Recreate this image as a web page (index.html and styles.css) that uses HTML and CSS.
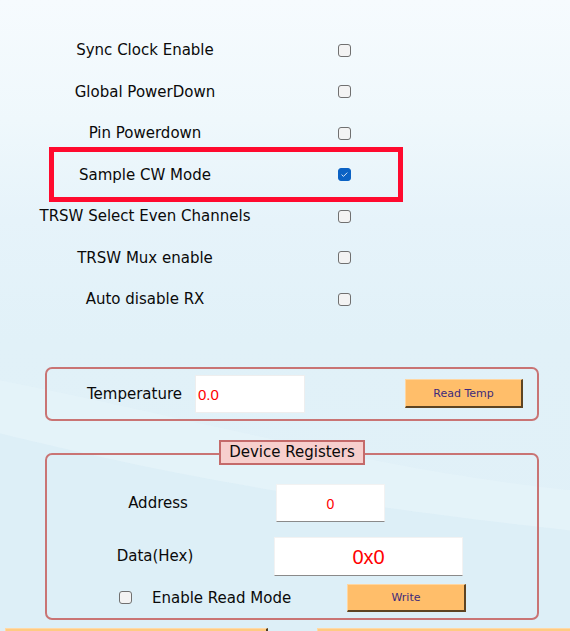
FILE: index.html
```html
<!DOCTYPE html>
<html>
<head>
<meta charset="utf-8">
<link rel="stylesheet" href="styles.css">
</head>
<body>
<div class="page">
  <div class="options">
    <div class="opt"><span class="lbl">Sync Clock Enable</span><input type="checkbox" class="cb"></div>
    <div class="opt"><span class="lbl">Global PowerDown</span><input type="checkbox" class="cb"></div>
    <div class="opt"><span class="lbl">Pin Powerdown</span><input type="checkbox" class="cb"></div>
    <div class="opt hl"><span class="lbl">Sample CW Mode</span><input type="checkbox" class="cb" checked></div>
    <div class="opt"><span class="lbl">TRSW Select Even Channels</span><input type="checkbox" class="cb"></div>
    <div class="opt"><span class="lbl">TRSW Mux enable</span><input type="checkbox" class="cb"></div>
    <div class="opt"><span class="lbl">Auto disable RX</span><input type="checkbox" class="cb"></div>
  </div>

  <div class="panel temp">
    <span class="temp-lbl">Temperature</span>
    <div class="field temp-field">0.0</div>
    <button class="btn read-btn">Read Temp</button>
  </div>

  <div class="panel regs">
    <div class="legend">Device Registers</div>
    <div class="reg-row addr-row">
      <span class="reg-lbl addr-lbl">Address</span>
      <div class="field addr-field">0</div>
    </div>
    <div class="reg-row data-row">
      <span class="reg-lbl data-lbl">Data(Hex)</span>
      <div class="field data-field">0x0</div>
    </div>
    <div class="reg-row mode-row">
      <input type="checkbox" class="cb mode-cb">
      <span class="mode-lbl">Enable Read Mode</span>
      <button class="btn write-btn">Write</button>
    </div>
  </div>

  <div class="footer">
    <button class="btn foot-btn"></button>
    <button class="btn foot-btn"></button>
  </div>
</div>
</body>
</html>
```
FILE: styles.css
```css
html {
  background: #e0f0f8;
}
body {
  margin: 0;
  font-family: "DejaVu Sans", sans-serif;
  color: #0a0a0a;
  background:
    url("data:image/svg+xml,%3Csvg xmlns='http://www.w3.org/2000/svg' width='570' height='700' viewBox='0 0 570 700'%3E%3Cpath d='M0 433 C150 470 300 500 570 530 L570 700 L0 700 Z' fill='%23daeef6' fill-opacity='0.6'/%3E%3Cpath d='M0 380 C200 420 380 470 570 490 L570 530 C300 500 150 470 0 433 Z' fill='%23e6f4fa' fill-opacity='0.7'/%3E%3C/svg%3E") no-repeat 0 0,
    linear-gradient(180deg, #f6fbfe 0px, #eff8fc 120px, #e6f3fa 220px, #e1f1f8 340px, #e0f0f8 100%);
  min-height: 631px;
}
.page {
  width: 570px;
}
.options {
  padding-top: 29.5px;
}
.opt {
  display: grid;
  grid-template-columns: 290px 13px;
  column-gap: 48px;
  height: 41.5px;
  align-items: center;
  font-size: 15px;
}
.opt .lbl {
  text-align: center;
  white-space: nowrap;
}
.opt.hl {
  box-sizing: border-box;
  width: 354px;
  height: 55px;
  margin: -6.75px 0 -6.75px 49px;
  border: 5px solid #ff0a2e;
  grid-template-columns: 182px 13px;
  column-gap: 102px;
}
.cb {
  appearance: none;
  -webkit-appearance: none;
  margin: 0;
  width: 13px;
  height: 13px;
  box-sizing: border-box;
  border: 1px solid #707070;
  border-radius: 3px;
  background: #f3f3f3;
}
.cb:checked {
  background: #0b62c4 url("data:image/svg+xml,%3Csvg xmlns='http://www.w3.org/2000/svg' width='11' height='11' viewBox='0 0 11 11'%3E%3Cpath d='M2.6 5.6 L4.5 7.4 L8.3 3.6' fill='none' stroke='%23d8e6f7' stroke-width='1'/%3E%3C/svg%3E") no-repeat center;
  border-color: #0b62c4;
}
.panel {
  box-sizing: border-box;
  width: 494px;
  margin-left: 45px;
  border: 2px solid #c97474;
  border-radius: 7px;
}
.temp {
  margin-top: 46.5px;
  height: 54px;
  display: flex;
  align-items: center;
  padding-left: 40px;
  padding-right: 14px;
}
.temp-lbl {
  font-size: 15px;
  width: 98px;
  white-space: nowrap;
}
.field {
  box-sizing: border-box;
  background: #ffffff;
  color: #ff0000;
  font-family: "Liberation Sans", Arial, sans-serif;
  display: flex;
  align-items: center;
}
.temp-field {
  width: 110px;
  height: 38px;
  margin-left: 10px;
  border: 1px solid #eeeeee;
  padding-left: 2px;
  padding-top: 2px;
  font-size: 15px;
}
.btn {
  box-sizing: border-box;
  background: #ffbe6a;
  border-style: solid;
  border-width: 1px 2px 2px 1px;
  border-color: #ffd6a0 #5e4422 #5e4422 #ffd6a0;
  font-family: "DejaVu Sans", sans-serif;
  font-size: 11px;
  color: #3e2a7a;
  padding: 0;
  border-radius: 0;
}
.read-btn {
  width: 118px;
  height: 29px;
  margin-left: auto;
}
.regs {
  margin-top: 32px;
  padding-bottom: 6px;
}
.legend {
  box-sizing: border-box;
  width: 146px;
  height: 25px;
  margin: -15px auto 0;
  border: 2px solid #c46a6a;
  background: #f7cfcd;
  font-size: 15px;
  line-height: 21px;
  text-align: center;
}
.reg-row {
  display: flex;
  align-items: center;
}
.reg-lbl {
  font-size: 15px;
  text-align: center;
}
.addr-row {
  margin-top: 19px;
  height: 38px;
}
.addr-lbl {
  width: 222px;
}
.addr-field {
  width: 109px;
  height: 38px;
  margin-left: 7px;
  border: 1px solid #f2f2f2;
  border-bottom: 1px solid #8a8a8a;
  justify-content: center;
  font-size: 14px;
  padding-top: 2px;
}
.data-row {
  margin-top: 15px;
  height: 39px;
}
.data-lbl {
  width: 216px;
}
.data-field {
  width: 189px;
  height: 39px;
  margin-left: 11px;
  border: 1px solid #f2f2f2;
  border-bottom: 1px solid #8a8a8a;
  justify-content: center;
  font-size: 20px;
  padding-top: 2px;
}
.mode-row {
  margin-top: 8px;
  height: 28px;
}
.mode-cb {
  margin-left: 72px;
}
.mode-lbl {
  font-size: 15px;
  width: 195px;
  margin-left: 20px;
  white-space: nowrap;
}
.write-btn {
  width: 119px;
  height: 28px;
}
.footer {
  display: flex;
  gap: 49px;
  padding-left: 5px;
  margin-top: 8px;
}
.foot-btn {
  flex: none;
  width: 263px;
  height: 30px;
  background: #ffcb82;
  border-color: #ffd9a6 #4a3a22 #4a3a22 #ffd9a6;
}
```
